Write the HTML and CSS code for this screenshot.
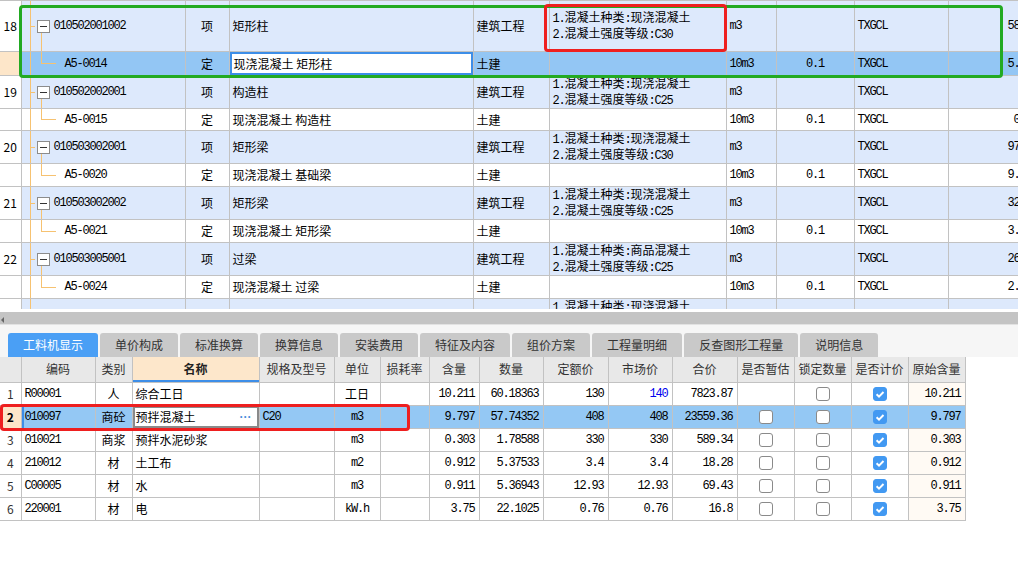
FILE: index.html
```html
<!DOCTYPE html>
<html lang="zh-CN">
<head>
<meta charset="utf-8">
<title>工料机显示</title>
<link rel="stylesheet" href="styles.css">
</head>
<body>
<div class="upper">
  <table class="grid top">
    <colgroup>
      <col style="width:21px"><col style="width:164px"><col style="width:44px"><col style="width:244px"><col style="width:76px"><col style="width:177px"><col style="width:50px"><col style="width:78px"><col style="width:94px"><col style="width:100px">
    </colgroup>
    <tr class="p h51">
      <td class="rn">18</td>
      <td class="tree tp"><div class="tn"><span class="box"></span><span class="m">010502001002</span></div></td>
      <td class="c">项</td><td>矩形柱</td><td>建筑工程</td>
      <td class="feat"><div><span class="m">1.</span>混凝土种类<span class="m">:</span>现浇混凝土</div><div><span class="m">2.</span>混凝土强度等级<span class="m">:C30</span></div></td>
      <td class="m">m3</td><td></td><td class="m">TXGCL</td><td class="m r">58.784</td>
    </tr>
    <tr class="ch sel h24">
      <td class="rn rsel"></td>
      <td class="tree tc"><div class="tn"><span class="m">A5-0014</span></div></td>
      <td class="c">定</td><td class="edit">现浇混凝土 矩形柱</td><td>土建</td><td></td>
      <td class="m">10m3</td><td class="m c">0.1</td><td class="m">TXGCL</td><td class="m r">5.8784</td>
    </tr>
    <tr class="p h33">
      <td class="rn">19</td>
      <td class="tree tp"><div class="tn"><span class="box"></span><span class="m">010502002001</span></div></td>
      <td class="c">项</td><td>构造柱</td><td>建筑工程</td>
      <td class="feat"><div><span class="m">1.</span>混凝土种类<span class="m">:</span>现浇混凝土</div><div><span class="m">2.</span>混凝土强度等级<span class="m">:C25</span></div></td>
      <td class="m">m3</td><td></td><td class="m">TXGCL</td><td class="m r">4.26</td>
    </tr>
    <tr class="ch h22">
      <td class="rn"></td>
      <td class="tree tc"><div class="tn"><span class="m">A5-0015</span></div></td>
      <td class="c">定</td><td>现浇混凝土 构造柱</td><td>土建</td><td></td>
      <td class="m">10m3</td><td class="m c">0.1</td><td class="m">TXGCL</td><td class="m r">0.426</td>
    </tr>
    <tr class="p h33">
      <td class="rn">20</td>
      <td class="tree tp"><div class="tn"><span class="box"></span><span class="m">010503002001</span></div></td>
      <td class="c">项</td><td>矩形梁</td><td>建筑工程</td>
      <td class="feat"><div><span class="m">1.</span>混凝土种类<span class="m">:</span>现浇混凝土</div><div><span class="m">2.</span>混凝土强度等级<span class="m">:C30</span></div></td>
      <td class="m">m3</td><td></td><td class="m">TXGCL</td><td class="m r">97.112</td>
    </tr>
    <tr class="ch h23">
      <td class="rn"></td>
      <td class="tree tc"><div class="tn"><span class="m">A5-0020</span></div></td>
      <td class="c">定</td><td>现浇混凝土 基础梁</td><td>土建</td><td></td>
      <td class="m">10m3</td><td class="m c">0.1</td><td class="m">TXGCL</td><td class="m r">9.7112</td>
    </tr>
    <tr class="p h33">
      <td class="rn">21</td>
      <td class="tree tp"><div class="tn"><span class="box"></span><span class="m">010503002002</span></div></td>
      <td class="c">项</td><td>矩形梁</td><td>建筑工程</td>
      <td class="feat"><div><span class="m">1.</span>混凝土种类<span class="m">:</span>现浇混凝土</div><div><span class="m">2.</span>混凝土强度等级<span class="m">:C25</span></div></td>
      <td class="m">m3</td><td></td><td class="m">TXGCL</td><td class="m r">32.556</td>
    </tr>
    <tr class="ch h23">
      <td class="rn"></td>
      <td class="tree tc"><div class="tn"><span class="m">A5-0021</span></div></td>
      <td class="c">定</td><td>现浇混凝土 矩形梁</td><td>土建</td><td></td>
      <td class="m">10m3</td><td class="m c">0.1</td><td class="m">TXGCL</td><td class="m r">3.2556</td>
    </tr>
    <tr class="p h33">
      <td class="rn">22</td>
      <td class="tree tp"><div class="tn"><span class="box"></span><span class="m">010503005001</span></div></td>
      <td class="c">项</td><td>过梁</td><td>建筑工程</td>
      <td class="feat"><div><span class="m">1.</span>混凝土种类<span class="m">:</span>商品混凝土</div><div><span class="m">2.</span>混凝土强度等级<span class="m">:C25</span></div></td>
      <td class="m">m3</td><td></td><td class="m">TXGCL</td><td class="m r">26.374</td>
    </tr>
    <tr class="ch h23">
      <td class="rn"></td>
      <td class="tree tc"><div class="tn"><span class="m">A5-0024</span></div></td>
      <td class="c">定</td><td>现浇混凝土 过梁</td><td>土建</td><td></td>
      <td class="m">10m3</td><td class="m c">0.1</td><td class="m">TXGCL</td><td class="m r">2.6374</td>
    </tr>
    <tr class="p h33">
      <td class="rn">23</td>
      <td class="tree tp"><div class="tn"><span class="box"></span><span class="m">010503004001</span></div></td>
      <td class="c">项</td><td>圈梁</td><td>建筑工程</td>
      <td class="feat"><div><span class="m">1.</span>混凝土种类<span class="m">:</span>现浇混凝土</div><div><span class="m">2.</span>混凝土强度等级<span class="m">:C25</span></div></td>
      <td class="m">m3</td><td></td><td class="m">TXGCL</td><td class="m r">18.92</td>
    </tr>
  </table>
  <div class="mark green"></div>
  <div class="mark red1"></div>
</div>
<div class="gap"></div>
<div class="hscroll"><span class="arr"></span></div>
<div class="tabbar">
  <div class="tab on">工料机显示</div>
  <div class="tab">单价构成</div>
  <div class="tab">标准换算</div>
  <div class="tab">换算信息</div>
  <div class="tab">安装费用</div>
  <div class="tab">特征及内容</div>
  <div class="tab">组价方案</div>
  <div class="tab">工程量明细</div>
  <div class="tab">反查图形工程量</div>
  <div class="tab">说明信息</div>
</div>
<div class="lower">
  <table class="grid bot">
    <colgroup>
      <col style="width:21px"><col style="width:74px"><col style="width:37px"><col style="width:127px"><col style="width:75px"><col style="width:46px"><col style="width:49px"><col style="width:50px"><col style="width:64px"><col style="width:65px"><col style="width:64px"><col style="width:65px"><col style="width:57px"><col style="width:57px"><col style="width:57px"><col style="width:57px">
    </colgroup>
    <tr class="hd">
      <th></th><th>编码</th><th>类别</th><th class="hname">名称</th><th>规格及型号</th><th>单位</th><th>损耗率</th><th>含量</th><th>数量</th><th>定额价</th><th>市场价</th><th>合价</th><th>是否暂估</th><th>锁定数量</th><th>是否计价</th><th>原始含量</th>
    </tr>
    <tr>
      <td class="rn">1</td><td class="m">R00001</td><td class="c">人</td><td>综合工日</td><td></td><td class="c">工日</td><td></td>
      <td class="m r">10.211</td><td class="m r">60.18363</td><td class="m r">130</td><td class="m r price">140</td><td class="m r">7823.87</td>
      <td class="c"></td><td class="c"><span class="cb"></span></td><td class="c"><span class="cb on"><svg viewBox="0 0 14 14" width="14" height="14"><path d="M3.6 7.3l2.4 2.3 4.5-4.6" fill="none" stroke="#fff" stroke-width="2"/></svg></span></td><td class="m r orig">10.211</td>
    </tr>
    <tr class="sel">
      <td class="rn rsel">2</td><td class="m code">010097</td><td class="c">商砼</td><td class="nedit"><div class="ned"><span>预拌混凝土</span><span class="dots">···</span></div></td><td class="m">C20</td><td class="m c">m3</td><td></td>
      <td class="m r">9.797</td><td class="m r">57.74352</td><td class="m r">408</td><td class="m r">408</td><td class="m r">23559.36</td>
      <td class="c"><span class="cb"></span></td><td class="c"><span class="cb"></span></td><td class="c"><span class="cb on"><svg viewBox="0 0 14 14" width="14" height="14"><path d="M3.6 7.3l2.4 2.3 4.5-4.6" fill="none" stroke="#fff" stroke-width="2"/></svg></span></td><td class="m r">9.797</td>
    </tr>
    <tr>
      <td class="rn">3</td><td class="m">010021</td><td class="c">商浆</td><td>预拌水泥砂浆</td><td></td><td class="m c">m3</td><td></td>
      <td class="m r">0.303</td><td class="m r">1.78588</td><td class="m r">330</td><td class="m r">330</td><td class="m r">589.34</td>
      <td class="c"><span class="cb"></span></td><td class="c"><span class="cb"></span></td><td class="c"><span class="cb on"><svg viewBox="0 0 14 14" width="14" height="14"><path d="M3.6 7.3l2.4 2.3 4.5-4.6" fill="none" stroke="#fff" stroke-width="2"/></svg></span></td><td class="m r orig">0.303</td>
    </tr>
    <tr>
      <td class="rn">4</td><td class="m">210012</td><td class="c">材</td><td>土工布</td><td></td><td class="m c">m2</td><td></td>
      <td class="m r">0.912</td><td class="m r">5.37533</td><td class="m r">3.4</td><td class="m r">3.4</td><td class="m r">18.28</td>
      <td class="c"><span class="cb"></span></td><td class="c"><span class="cb"></span></td><td class="c"><span class="cb on"><svg viewBox="0 0 14 14" width="14" height="14"><path d="M3.6 7.3l2.4 2.3 4.5-4.6" fill="none" stroke="#fff" stroke-width="2"/></svg></span></td><td class="m r orig">0.912</td>
    </tr>
    <tr>
      <td class="rn">5</td><td class="m">C00005</td><td class="c">材</td><td>水</td><td></td><td class="m c">m3</td><td></td>
      <td class="m r">0.911</td><td class="m r">5.36943</td><td class="m r">12.93</td><td class="m r">12.93</td><td class="m r">69.43</td>
      <td class="c"><span class="cb"></span></td><td class="c"><span class="cb"></span></td><td class="c"><span class="cb on"><svg viewBox="0 0 14 14" width="14" height="14"><path d="M3.6 7.3l2.4 2.3 4.5-4.6" fill="none" stroke="#fff" stroke-width="2"/></svg></span></td><td class="m r orig">0.911</td>
    </tr>
    <tr>
      <td class="rn">6</td><td class="m">220001</td><td class="c">材</td><td>电</td><td></td><td class="m c">kW.h</td><td></td>
      <td class="m r">3.75</td><td class="m r">22.1025</td><td class="m r">0.76</td><td class="m r">0.76</td><td class="m r">16.8</td>
      <td class="c"><span class="cb"></span></td><td class="c"><span class="cb"></span></td><td class="c"><span class="cb on"><svg viewBox="0 0 14 14" width="14" height="14"><path d="M3.6 7.3l2.4 2.3 4.5-4.6" fill="none" stroke="#fff" stroke-width="2"/></svg></span></td><td class="m r orig">3.75</td>
    </tr>
  </table>
  <div class="mark red2"></div>
</div>
</body>
</html>
```
FILE: styles.css
```css
html, body {
  margin: 0;
  padding: 0;
  background: #fff;
}
body {
  width: 1018px;
  height: 574px;
  overflow: hidden;
  font-family: "Noto Sans CJK SC", sans-serif;
  font-size: 12px;
  color: #000;
}

/* ---------- shared grid ---------- */
.grid {
  border-collapse: collapse;
  table-layout: fixed;
}
.grid td, .grid th {
  border: 1px solid #c2c2c2;
  padding: 0 3px;
  white-space: nowrap;
  overflow: hidden;
  line-height: 14px;
  vertical-align: middle;
  text-align: left;
  font-weight: normal;
}
.m {
  font-family: "Liberation Mono", monospace;
  font-size: 12px;
  letter-spacing: -1.2px;
}
.grid .c { text-align: center; }
.grid .r { text-align: right; padding-right: 4px; }
.grid .rn {
  text-align: center;
  padding: 0;
  background: #fff;
}
.grid .rsel {
  background: #fde6c9;
  font-weight: bold;
}

/* ---------- upper tree grid ---------- */
.upper {
  position: relative;
  width: 1018px;
  height: 309px;
  overflow: hidden;
}
.top { width: 1048px; }
.top .rn { border-left: none; }
.top tr:first-child td { border-top: 1px solid #c2c2c2; }
.h51 { height: 51px; }
.h33 { height: 33px; }
.h24 { height: 24px; }
.h23 { height: 23px; }
.h22 { height: 22px; }
.top tr.p td { background-color: #dde9fc; }
.top tr.p td.rn { background-color: #fff; }
.top tr.sel td { background-color: #93c6f4; }
.top tr.sel td.rsel { background-color: #fde6c9; }
.top tr.sel td.edit {
  background-color: #fff;
  box-shadow: inset 0 0 0 2px #3d8ee8;
  padding-left: 4px;
}
.feat { line-height: 14px; }

.tree {
  padding: 0;
  background-repeat: no-repeat;
}
.tn {
  display: flex;
  align-items: center;
}
.tp {
  background-image:
    linear-gradient(#f6c271, #f6c271),
    linear-gradient(#f6c271, #f6c271),
    linear-gradient(#f6c271, #f6c271);
  background-size: 1px 100%, 5px 1px, 1px calc(50% - 6px);
  background-position: 8px 0, 8px 50%, 19px 100%;
}
.tp .tn { padding-left: 12px; }
.tc {
  background-image:
    linear-gradient(#f6c271, #f6c271),
    linear-gradient(#f6c271, #f6c271),
    linear-gradient(#f6c271, #f6c271);
  background-size: 1px 100%, 1px 50%, 15px 1px;
  background-position: 8px 0, 19px 0, 19px 50%;
}
.tc .tn { padding-left: 40px; }
.box {
  display: inline-block;
  width: 11px;
  height: 11px;
  border: 1px solid #8c8c8c;
  background: #fff linear-gradient(#333, #333) center / 7px 1px no-repeat;
  margin-right: 4px;
  flex: none;
}

/* annotation marks */
.mark {
  position: absolute;
  box-sizing: border-box;
  pointer-events: none;
}
.green {
  left: 19px;
  top: 5px;
  width: 984px;
  height: 73px;
  border: 3px solid #22aa22;
  border-radius: 4px;
}
.red1 {
  left: 544px;
  top: 4px;
  width: 183px;
  height: 48px;
  border: 3px solid #ee1f1f;
  border-radius: 4px;
}

/* ---------- scrollbar + tabs ---------- */
.gap { height: 3px; background: #fff; }
.hscroll {
  height: 12px;
  background: #c4c4c4;
  display: flex;
  align-items: flex-end;
}
.arr {
  width: 0;
  height: 0;
  border-right: 3px solid #666;
  border-top: 3px solid transparent;
  border-bottom: 3px solid transparent;
  margin: 0 0 1px 1px;
}
.tabbar {
  display: flex;
  gap: 2px;
  padding: 8px 0 0 8px;
  background: #f6f6f6;
  border-top: 1px solid #e2e2e2;
}
.tab {
  height: 24px;
  line-height: 24px;
  padding: 0 15px;
  background: #c9c9c9;
  color: #333;
  border-radius: 3px 3px 0 0;
  font-size: 12px;
}
.tab.on {
  background: #4a9ff5;
  color: #fff;
}

/* ---------- lower material grid ---------- */
.lower {
  position: relative;
}
.bot { width: 965px; }
.bot tr { height: 23px; }
.bot tr.hd { height: 25px; }
.bot th {
  background: #e8e8e8;
  color: #333;
  text-align: center;
  border-top: none;
}
.bot th:first-child { border-left: none; }
.bot td.rn { border-left: none; color: #333; }
.bot th.hname {
  background: #fde7cb;
  font-weight: bold;
  color: #222;
  box-shadow: inset 0 -2px 0 #3d8ee8;
}
.bot td.orig { background: #fffaf4; }
.bot tr.sel td { background: #94c8f4; }
.bot tr.sel td.rsel { background: #fde6c9; color: #000; }
.bot tr.sel td.code { box-shadow: inset 2px 0 0 #3d8ee8; }
.bot tr.sel td.nedit {
  background: #fff;
  box-shadow: inset 0 0 0 2px #8a8a8a;
}
.ned {
  display: flex;
  justify-content: space-between;
  align-items: center;
}
.dots {
  font-family: "Liberation Sans", sans-serif;
  font-weight: bold;
  font-size: 12px;
  color: #4a8fdc;
  letter-spacing: 0;
  padding-right: 4px;
}
.price {
  color: #0000ee;
  font-weight: bold;
}
.cb {
  display: inline-block;
  box-sizing: border-box;
  width: 14px;
  height: 14px;
  border: 1px solid #8a8a8a;
  border-radius: 3px;
  background: #fff;
  vertical-align: middle;
}
.cb.on {
  background: #4299f2;
  border-color: #4299f2;
}
.cb svg {
  display: block;
  margin: -1px;
}
.red2 {
  left: 0;
  top: 47px;
  width: 410px;
  height: 27px;
  border: 3px solid #ee1f1f;
  border-radius: 4px;
}
```
